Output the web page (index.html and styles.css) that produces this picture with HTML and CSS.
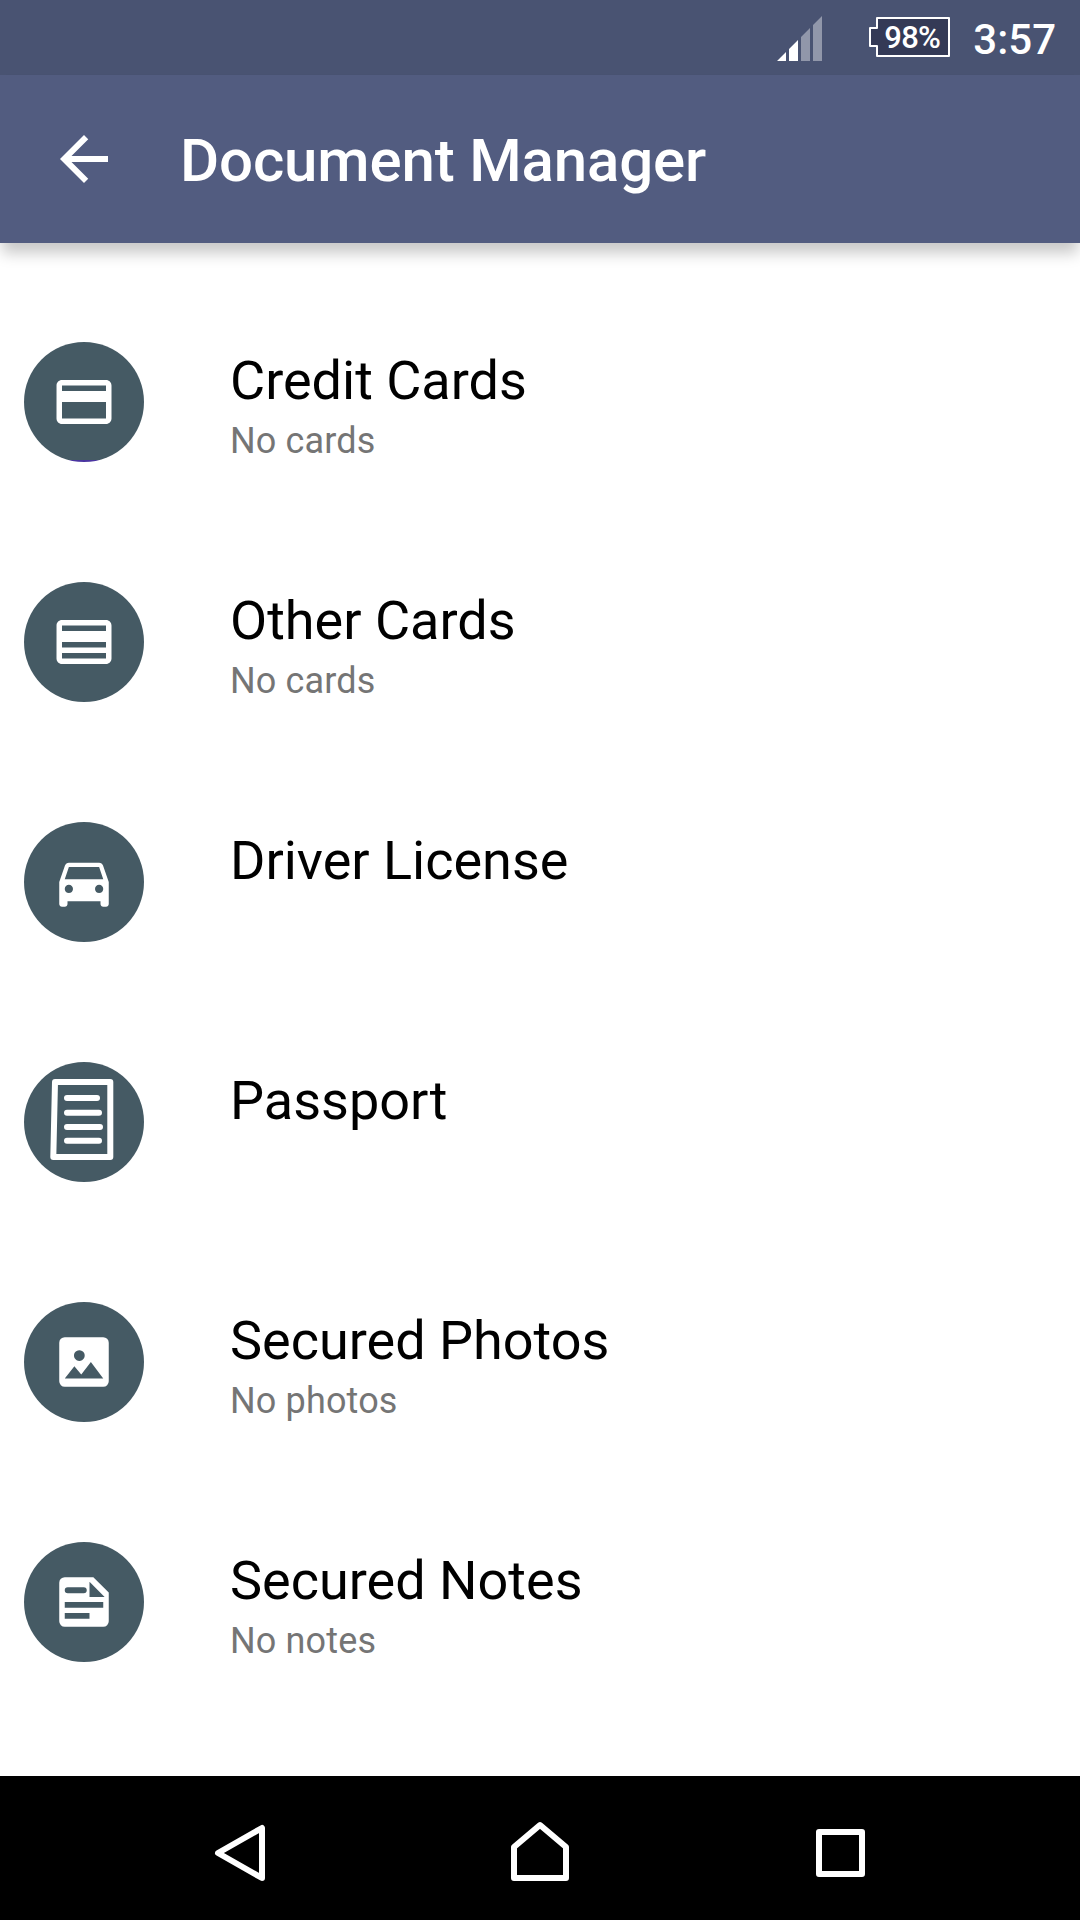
FILE: index.html
```html
<!DOCTYPE html>
<html lang="en">
<head>
    <meta charset="UTF-8">
    <meta name="viewport" content="width=device-width, initial-scale=1.0">
    <title>Document Manager</title>
    <link rel="stylesheet" href="styles.css">
</head>
<body>
    <div class="screen">
        <div class="status-bar">
            <svg class="signal" viewBox="0 0 45 45">
                <path d="M0 45L9 36V45zM12 45V33L21 24V45z"/>
                <path class="signal-off" d="M24 45V21L33 12V45zM36 45V9L45 0V45z"/>
            </svg>
            <div class="battery">
                <svg viewBox="0 0 81 40">
                    <path d="M8 1H80V39H8V29H1V11H8z"/>
                </svg>
                <span>98%</span>
            </div>
            <span class="clock">3:57</span>
        </div>

        <header class="app-bar">
            <svg class="back" viewBox="0 0 24 24">
                <path d="M20 11H7.83l5.59-5.59L12 4l-8 8 8 8 1.41-1.41L7.83 13H20v-2z"/>
            </svg>
            <h1>Document Manager</h1>
        </header>

        <main class="list">
            <div class="item">
                <div class="icon icon-credit">
                    <svg viewBox="0 0 24 24">
                        <path d="M20 4H4c-1.11 0-1.99.89-1.99 2L2 18c0 1.11.89 2 2 2h16c1.11 0 2-.89 2-2V6c0-1.11-.89-2-2-2zm0 14H4v-6h16v6zm0-10H4V6h16v2z"/>
                    </svg>
                </div>
                <div class="text">
                    <h2>Credit Cards</h2>
                    <p>No cards</p>
                </div>
            </div>

            <div class="item">
                <div class="icon">
                    <svg viewBox="0 0 24 24">
                        <path d="M20 4H4c-1.11 0-1.99.89-1.99 2L2 18c0 1.11.89 2 2 2h16c1.11 0 2-.89 2-2V6c0-1.11-.89-2-2-2zm0 14H4v-2h16v2zm0-4H4v-2h16v2zm0-6H4V6h16v2z"/>
                    </svg>
                </div>
                <div class="text">
                    <h2>Other Cards</h2>
                    <p>No cards</p>
                </div>
            </div>

            <div class="item">
                <div class="icon">
                    <svg viewBox="0 0 24 24">
                        <path d="M18.92 6.01C18.72 5.42 18.16 5 17.5 5h-11c-.66 0-1.21.42-1.42 1.01L3 12v8c0 .55.45 1 1 1h1c.55 0 1-.45 1-1v-1h12v1c0 .55.45 1 1 1h1c.55 0 1-.45 1-1v-8l-2.08-5.99zM6.5 16c-.83 0-1.5-.67-1.5-1.5S5.67 13 6.5 13s1.5.67 1.5 1.5S7.33 16 6.5 16zm11 0c-.83 0-1.5-.67-1.5-1.5s.67-1.5 1.5-1.5 1.5.67 1.5 1.5-.67 1.5-1.5 1.5zM5 11l1.5-4.5h11L19 11H5z"/>
                    </svg>
                </div>
                <div class="text">
                    <h2>Driver License</h2>
                </div>
            </div>

            <div class="item">
                <div class="icon">
                    <svg class="passport" viewBox="0 0 120 120">
                        <path d="M31 20H86.3V95H29.3z"/>
                        <path d="M43 36H73M43 50.7H75M43 65H76M43 78.7H75"/>
                    </svg>
                </div>
                <div class="text">
                    <h2>Passport</h2>
                </div>
            </div>

            <div class="item">
                <div class="icon">
                    <svg viewBox="0 0 24 24">
                        <path fill-rule="evenodd" d="M5 3H19a2 2 0 0 1 2 2V19a2 2 0 0 1-2 2H5a2 2 0 0 1-2-2V5a2 2 0 0 1 2-2zM5 18H19L14.5 12 11 16.5 8.5 13.5zM10.3 7.7a1.95 1.95 0 1 0 .01 0z"/>
                    </svg>
                </div>
                <div class="text">
                    <h2>Secured Photos</h2>
                    <p>No photos</p>
                </div>
            </div>

            <div class="item">
                <div class="icon">
                    <svg viewBox="0 0 24 24">
                        <path fill-rule="evenodd" d="M5 3H15.4L21 8.5V19a2 2 0 0 1-2 2H5a2 2 0 0 1-2-2V5a2 2 0 0 1 2-2zM14 4.6V10.2H19.5zM6.1 6.6a1.1 1.1 0 0 0 0 2.2H11.9a1.1 1.1 0 0 0 0-2.2zM5 12V14.1H19V12zM5 16V18.1H14V16z"/>
                    </svg>
                </div>
                <div class="text">
                    <h2>Secured Notes</h2>
                    <p>No notes</p>
                </div>
            </div>
        </main>

        <nav class="nav-bar">
            <svg viewBox="0 0 60 60"><path d="M52 7V57L8 32z"/></svg>
            <svg viewBox="0 0 60 60"><path d="M30 4L56 26V57H4V26z"/></svg>
            <svg viewBox="0 0 60 60"><path d="M9 11H52V53H9z"/></svg>
        </nav>
    </div>
</body>
</html>
```
FILE: styles.css
```css
* {
    box-sizing: border-box;
}

body {
    margin: 0;
    font-family: Roboto, sans-serif;
    background-color: #fff;
    color: #000;
}

h1, h2, p {
    margin: 0;
    font-weight: 400;
    white-space: nowrap;
}

svg {
    display: block;
    fill: #fff;
}

.screen {
    width: 1080px;
    height: 1920px;
    display: flex;
    flex-direction: column;
    overflow: hidden;
}

/* Status bar */
.status-bar {
    height: 75px;
    flex: none;
    display: flex;
    justify-content: flex-end;
    align-items: flex-start;
    padding: 16px 24px 0 0;
    background-color: #495372;
    color: #fff;
    font-weight: 500;
}

.signal {
    width: 45px;
    height: 45px;
    margin-right: 47px;
}

.signal-off {
    fill: rgba(255, 255, 255, 0.4);
}

.battery {
    display: grid;
    width: 81px;
    height: 40px;
    margin-top: 1px;
    margin-right: 23px;
}

.battery svg,
.battery span {
    grid-area: 1 / 1;
}

.battery svg {
    width: 81px;
    height: 40px;
    fill: #343a56;
    stroke: #fff;
    stroke-width: 2;
    stroke-linejoin: round;
}

.battery span {
    padding-left: 15px;
    font-size: 31px;
    line-height: 41px;
    letter-spacing: -0.8px;
    z-index: 1;
}

.clock {
    font-size: 42px;
    line-height: 48px;
}

/* App bar */
.app-bar {
    height: 168px;
    flex: none;
    display: flex;
    align-items: center;
    padding-left: 48px;
    background-color: #525c80;
    box-shadow: 0 12px 14px -2px rgba(0, 0, 0, 0.22);
    color: #fff;
}

.back {
    width: 72px;
    height: 72px;
    margin-right: 60px;
}

.app-bar h1 {
    padding-top: 4px;
    font-size: 60px;
    font-weight: 500;
    line-height: 70px;
    letter-spacing: -0.15px;
}

/* Document list */
.list {
    flex: 1;
    padding-top: 39px;
}

.item {
    height: 240px;
    display: flex;
    align-items: flex-start;
    padding: 60px 24px;
}

.icon {
    width: 120px;
    height: 120px;
    flex: none;
    display: flex;
    align-items: center;
    justify-content: center;
    margin-right: 86px;
    border-radius: 50%;
    background-color: #455a64;
}

.icon-credit {
    background-image: linear-gradient(#455a64 118px, #4a35a0 118px);
}

.icon svg {
    width: 66px;
    height: 66px;
}

.icon .passport {
    width: 120px;
    height: 120px;
    fill: none;
    stroke: #fff;
    stroke-width: 6;
    stroke-linecap: round;
    stroke-linejoin: round;
}

.text {
    padding-top: 7px;
}

.text h2 {
    font-size: 54px;
    line-height: 64px;
}

.text p {
    font-size: 36px;
    line-height: 42px;
    margin-top: 7px;
    letter-spacing: 0.15px;
    color: #757575;
}

/* Navigation buttons */
.nav-bar {
    height: 144px;
    flex: none;
    display: flex;
    justify-content: center;
    gap: 240px;
    padding-top: 45px;
    background-color: #000;
}

.nav-bar svg {
    width: 60px;
    height: 60px;
    fill: none;
    stroke: #fff;
    stroke-width: 6;
    stroke-linejoin: round;
}
```
